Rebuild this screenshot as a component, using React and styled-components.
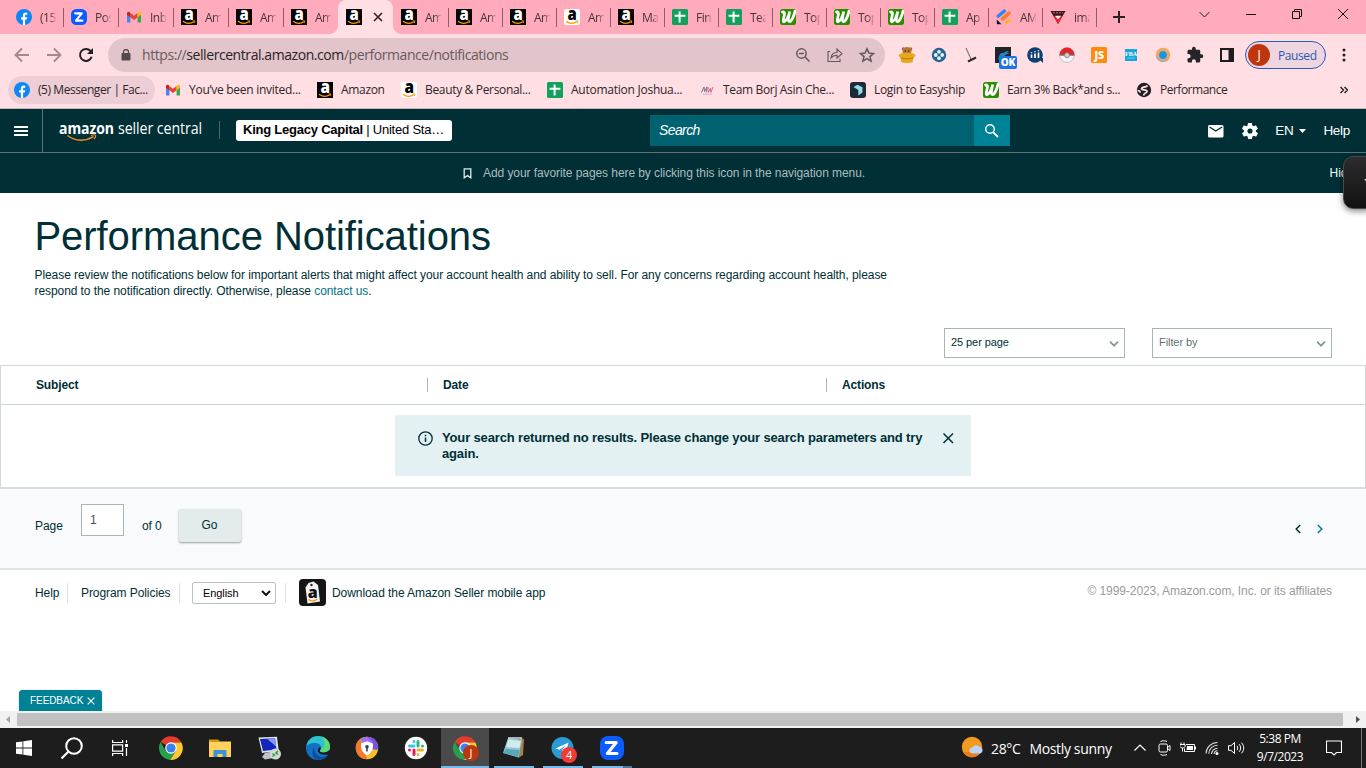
import React from 'react';
import styled, { createGlobalStyle, css } from 'styled-components';

const TABS = [
  { icon: 'facebook', label: '(15)' },
  { icon: 'zoom', label: 'Pos' },
  { icon: 'gmail', label: 'Inbox' },
  { icon: 'amazon', label: 'Am' },
  { icon: 'amazon', label: 'Am' },
  { icon: 'amazon', label: 'Am' },
  { icon: 'amazon', active: true },
  { icon: 'amazon', label: 'Am', noLine: true },
  { icon: 'amazon', label: 'Am', narrow: true },
  { icon: 'amazon', label: 'Am', narrow: true },
  { icon: 'amazonLight', label: 'Am', narrow: true },
  { icon: 'amazon', label: 'Ma', narrow: true },
  { icon: 'sheets', label: 'Fin', narrow: true },
  { icon: 'sheets', label: 'Tea', narrow: true },
  { icon: 'leaf', label: 'Top', narrow: true },
  { icon: 'leaf', label: 'Top', narrow: true },
  { icon: 'leaf', label: 'Top', narrow: true },
  { icon: 'sheets', label: 'Ap', narrow: true },
  { icon: 'stripes', label: 'AM', narrow: true },
  { icon: 'triangle', label: 'ima', narrow: true },
];

const BOOKMARKS = [
  { icon: 'facebook', label: '(5) Messenger | Fac...', width: 151, spacing: -0.43, active: true },
  { icon: 'gmail', label: 'You’ve been invited...', width: 152, spacing: -0.27 },
  { icon: 'amazon', label: 'Amazon', width: 84 },
  { icon: 'amazonLight', label: 'Beauty & Personal...', width: 146 },
  { icon: 'sheets', label: 'Automation Joshua...', width: 152, spacing: -0.25 },
  { icon: 'mw', label: 'Team Borj Asin Che...', width: 151, spacing: -0.34 },
  { icon: 'easyship', label: 'Login to Easyship', width: 133 },
  { icon: 'leaf', label: 'Earn 3% Back*and s...', width: 153, spacing: -0.4 },
  { icon: 'globe', label: 'Performance', width: 110, spacing: -0.5 },
];

const Svg = ({ size = 16, width, height, box = '0 0 16 16', children, ...rest }) => (
  <svg width={width || size} height={height || size} viewBox={box} fill="none" {...rest}>
    {children}
  </svg>
);

const AmazonIcon = ({ light }) => (
  <Svg>
    <rect width="16" height="16" rx={light ? 2 : 0} fill={light ? '#fff' : '#000'} />
    <text x="3.4" y="11" textLength="9.2" lengthAdjust="spacingAndGlyphs" fontFamily="Open Sans, sans-serif" fontWeight="800" fontSize="17" fill={light ? '#000' : '#fff'}>a</text>
    <path d="M2 12.2c3.6 2.6 7.8 2.5 10.8.6" stroke="#f90" strokeWidth="1.2" />
    <path d="M11.6 11.9h2.4l-.9 2.2" stroke="#f90" strokeWidth=".9" />
  </Svg>
);

const ZIcon = ({ size = 16 }) => (
  <Svg size={size} box="0 0 24 24">
    <rect width="24" height="24" rx="8" fill="#0b5cff" />
    <path d="M6.2 6.5h10L7.4 17.5H17" stroke="#fff" strokeWidth="3.2" strokeLinejoin="round" strokeLinecap="round" />
  </Svg>
);

const ChromeIcon = () => (
  <Svg size={24} box="0 0 24 24">
    <path d="M12 12 1.6 6A12 12 0 0 1 22.4 6.4H12z" fill="#e33b2e" />
    <path d="M1.6 6A12 12 0 0 0 11.2 24L17 15 12 12 6.8 15z" fill="#26a14b" />
    <path d="M12 6.4h10.4A12 12 0 0 1 11.2 24l5.7-9z" fill="#fdc92f" />
    <circle cx="12" cy="12" r="5.8" fill="#fff" />
    <circle cx="12" cy="12" r="4.6" fill="#3b82f0" />
  </Svg>
);

const icons = {
  amazon: <AmazonIcon />,
  amazonLight: <AmazonIcon light />,
  zoom: <ZIcon />,
  facebook: (
    <Svg>
      <circle cx="8" cy="8" r="8" fill="#0f86f5" />
      <path d="M6.9 16v-5.4H5V8.3h1.9V6.7c0-2 1.1-3.1 2.9-3.1l1.5.1v2h-.9c-1 0-1.3.6-1.3 1.2v1.4h2.1l-.4 2.3H9.1V16z" fill="#fff" />
    </Svg>
  ),
  gmail: (
    <Svg>
      <path d="M1 13.6V4.4l3.4 2.4v6.8z" fill="#4285f4" />
      <path d="M11.6 13.6V6.8L15 4.4v9.2z" fill="#34a853" />
      <path d="M4.4 4 8 6.7 11.6 4v4.2L8 10.9 4.4 8.2z" fill="#ea4335" />
      <path d="M1 4.6C1 2.6 3 2.2 4.4 3.9v4.3L1 5.7z" fill="#c5221f" />
      <path d="M15 4.6c0-2-2-2.4-3.4-.7v4.3L15 5.7z" fill="#fbbc04" />
    </Svg>
  ),
  sheets: (
    <Svg>
      <rect width="16" height="16" rx="1.5" fill="#12a05c" />
      <path d="M2.6 6.8h10.8M7.6 2.6v11" stroke="#fff" strokeWidth="2" />
    </Svg>
  ),
  leaf: (
    <Svg>
      <rect width="16" height="16" rx="2.5" fill="#249000" />
      <path d="M1.5 3.6C4 2 5 3.400 4.200 6.500c-.9 3.500-1.500 6.500-.2 6.300C6.500 12 8.500 7 9.800 2.500 8.800 6.500 7.500 12.600 9.300 12.700 11.500 12.500 14 7 15.300 1" stroke="#fff" strokeWidth="2.700" />
    </Svg>
  ),
  stripes: (
    <Svg>
      <path d="M2.200 7.200 8.300 2" stroke="#2f86ee" strokeWidth="3.400" strokeLinecap="round" />
      <path d="m6.500 9.800 6.500-5.600" stroke="#ff7a2b" strokeWidth="3.600" strokeLinecap="round" />
      <path d="m10.500 13.700 3-2.700" stroke="#ffb521" strokeWidth="3" strokeLinecap="round" />
      <path d="M.8 10.500v4.700h4.700z" fill="#10133f" />
    </Svg>
  ),
  triangle: (
    <Svg>
      <path d="M.5 2h15L8 15z" fill="#3b1520" />
      <path d="M3.500 7h9L8 15z" fill="#f0222b" />
      <path d="M5 6.800h6L8 10.500z" fill="#f5eef0" />
      <path d="M3 3.800h10" stroke="#c87a52" strokeDasharray="2 1" />
    </Svg>
  ),
  mw: (
    <Svg>
      <path d="M2.500 10.500 5 5l.5 4.500L8 5l-.8 5.500" stroke="#6d7799" />
      <path d="m9 5 .3 5.500L11.500 6l.3 4.500L14 5" stroke="#d56c84" />
      <path d="M4 12.300h9" stroke="#c6a2b0" strokeWidth=".7" />
    </Svg>
  ),
  easyship: (
    <Svg>
      <rect width="16" height="16" rx="3" fill="#1c2b3b" />
      <path d="M3.500 5 7.500 2.800l5 2.400v5.200l-4.200 3V8z" fill="#8fdce2" />
    </Svg>
  ),
  globe: (
    <Svg>
      <circle cx="8" cy="8" r="7.200" fill="#1f2023" />
      <path d="M11.500 3.500C10 6 6.500 4 5.500 6.500c-.5 2 5.500.5 5.500 2.800 0 2-3 1.200-3.500 4.200" stroke="#ffdee4" strokeWidth="1.800" />
      <path d="M1.500 8.500c1.500 0 2.700.8 2.700 2.300" stroke="#ffdee4" strokeWidth="1.600" />
    </Svg>
  ),
};

const extensions = [
  // bear in a pot
  <Svg key="bear" size={18} box="0 0 18 18">
    <circle cx="5.500" cy="3" r="1.800" fill="#a4682d" />
    <circle cx="12.500" cy="3" r="1.800" fill="#a4682d" />
    <circle cx="9" cy="5.500" r="4.500" fill="#b87938" />
    <ellipse cx="9" cy="9.500" rx="8.500" ry="2.800" fill="#e7a81c" />
    <path d="M2.500 11h13l-.8 5c-2.500 1.300-9 1.300-11.400 0z" fill="#e7a81c" />
    <path d="M2.500 11.800c3 1.300 10 1.300 13 0" stroke="#b87b12" />
    <circle cx="7.300" cy="5" r=".7" fill="#412" />
    <circle cx="10.700" cy="5" r=".7" fill="#412" />
  </Svg>,
  <Svg key="clover">
    <circle cx="8" cy="8" r="7.200" fill="#2b6390" />
    <g fill="#d9f4fa">
      <circle cx="8" cy="4.800" r="1.900" />
      <circle cx="8" cy="11.200" r="1.900" />
      <circle cx="4.800" cy="8" r="1.900" />
      <circle cx="11.200" cy="8" r="1.900" />
    </g>
  </Svg>,
  <Svg key="broom">
    <path d="m3 1 5 11" stroke="#777" strokeWidth="1.100" />
    <path d="m5 14.500 8-4" stroke="#292929" strokeWidth="2" />
  </Svg>,
  null,
  <Svg key="bars">
    <circle cx="8" cy="8" r="7.800" fill="#0f3e73" />
    <path d="M11 11h5v5z" fill="#0f3e73" />
    <path d="M4.500 7.500V11M8 6.500V11M11.500 5.500V11" stroke="#fff" strokeWidth="1.700" />
    <path d="M4.500 5.200v1M8 4.200v1M11.500 3.200v1" stroke="#fff" strokeWidth="1.500" />
  </Svg>,
  <Svg key="ball">
    <circle cx="8" cy="8" r="7.500" fill="#f3f3f3" stroke="#b9aeb0" strokeWidth=".7" />
    <path d="M.5 8a7.500 7.500 0 0 1 15 0z" fill="#e02429" />
    <path d="M.5 8.200h15" stroke="#7c7c7c" strokeWidth="1.300" />
    <circle cx="8" cy="8.200" r="2.400" fill="#d5d5d5" stroke="#888" />
  </Svg>,
  <Svg key="js">
    <rect width="16" height="16" rx="1.500" fill="#ff8a0c" />
    <text x="8.300" y="12.300" textAnchor="middle" fontFamily="Open Sans, sans-serif" fontWeight="800" fontSize="10.500" fill="#fff">JS</text>
  </Svg>,
  <Svg key="fba" size={12} box="0 0 12 12">
    <rect width="12" height="12" fill="#16a8dd" />
    <text x="6" y="7" textAnchor="middle" fontFamily="Liberation Serif, serif" fontWeight="700" fontSize="6" fill="#fff">FBA</text>
    <path d="M2 9h8" stroke="#61c8ec" />
  </Svg>,
  <Svg key="ring">
    <circle cx="8" cy="8" r="5.700" stroke="#f4a55f" strokeWidth="3.200" />
    <path d="M2.500 9.500A5.700 5.700 0 0 0 12 12" stroke="#b9aaa5" strokeWidth="2" />
    <circle cx="8" cy="8" r="4" fill="#1e95d6" />
  </Svg>,
  <Svg key="puzzle" size={18} box="0 0 24 24">
    <path fill="#242528" d="M20.500 11H19V7c0-1.100-.9-2-2-2h-4V3.500a2.500 2.500 0 0 0-5 0V5H4c-1.100 0-2 .9-2 2v3.800h1.500a2.700 2.700 0 0 1 0 5.400H2V20c0 1.100.9 2 2 2h3.800v-1.500a2.700 2.700 0 0 1 5.400 0V22H17c1.100 0 2-.9 2-2v-4h1.500a2.500 2.500 0 0 0 0-5z" />
  </Svg>,
  <Svg key="panel">
    <path d="M2 2h12v12H2z" stroke="#1d1d20" strokeWidth="2" />
    <path d="M9.500 2H14v12H9.500z" fill="#1d1d20" />
  </Svg>,
];

const pinnedApps = [
  { key: 'chrome', icon: <ChromeIcon /> },
  {
    key: 'files',
    icon: (
      <Svg size={24} box="0 0 24 24">
        <path d="M1 3.500h9l2 2h-9L1 7z" fill="#dc9800" />
        <path d="M1 5.500h22V21H1z" fill="#ffd25e" />
        <path d="M5.500 21v-6c0-.6.4-1 1-1h11c.6 0 1 .4 1 1v6h-4v-3h-5v3z" fill="#3c94d4" />
      </Svg>
    ),
  },
  {
    key: 'remote',
    icon: (
      <Svg size={26} box="0 0 26 26">
        <path d="m2.500 2.500 18.500-.7 1.700 14L6 18z" fill="#dfe3ea" />
        <path d="m4 4 15-.7 1.500 11.200L7 16z" fill="#1327bb" />
        <path d="m11 3.700 8-.4 1 8.200z" fill="#7d9aef" />
        <path d="m9 18 7-1.500 2 6.500-9 1.500-3-2.500z" fill="#bfc3c8" />
        <circle cx="19.500" cy="19" r="5.500" fill="#d4d8d2" />
        <path d="m16.500 18.500 2 1.500-2 1.500M22 16l-2 2 2 1.500" stroke="#269633" strokeWidth="1.400" />
      </Svg>
    ),
  },
  {
    key: 'edge',
    icon: (
      <Svg size={24} box="0 0 24 24">
        <circle cx="12" cy="12" r="12" fill="#1570c5" />
        <path d="M.3 10.500C1.500 4 6 0 12 0c7 0 12 5 12 10.500 0 4-3 6-6.500 6-3 0-4.300-1.300-3-3 1.800-2.500-.4-6.500-5-6.500C5 7 1.500 8.500.3 10.500z" fill="#2fc0d1" />
        <path d="M16 .8c5 1.800 8 5.600 8 9.700 0 4-3 6-6.500 6-3 0-4.300-1.300-3-3 4.500-.5 5.500-7 1.500-12.700z" fill="#5bdc72" />
        <path d="M8.500 11.500c-1 5 3 9.500 8 9.500 2.500 0 4.500-1 6-2.500-2 3.500-6 5.500-10.500 5.500-4-1-6-5-5.500-8.500.2-2 1-3.300 2-4z" fill="#0c4f9e" />
        <path d="M14.500 13.500c-1.300 1.700 0 3 3 3 2.500 0 4.700-.9 5.800-2.700L24 17l-1 1.500c-6 1-10.500-.5-11-3.500 0-2 .5-3.300 2-4 .9.900 1 1.800.5 2.500z" fill="#1a1a1c" />
      </Svg>
    ),
  },
  {
    key: 'shield',
    icon: (
      <Svg size={24} box="0 0 24 24">
        <circle cx="12" cy="12" r="11.200" fill="#f9bd32" />
        <path d="M12 12V.8A11.200 11.200 0 0 1 22.500 8c1 3 .7 5-.5 6z" fill="#7b4fe6" />
        <path d="M5 3.300A11.200 11.200 0 0 1 12 .8L18 6 8 8z" fill="#a070ee" />
        <path d="M5 3.300A11.200 11.200 0 0 0 12 23.200L9 12z" fill="#f5792c" />
        <path d="M12 5.200 18 7.500c.5 5.500-1.500 9.500-6 12-4.500-2.500-6.500-6.500-6-12z" fill="#fff" />
        <circle cx="12" cy="10.700" r="1.800" fill="#333c5c" />
        <path d="M12 11v4.500" stroke="#333c5c" strokeWidth="1.600" />
      </Svg>
    ),
  },
  {
    key: 'slack',
    icon: (
      <Svg size={24} box="0 0 24 24">
        <circle cx="12" cy="12" r="11.200" fill="#fff" />
        <g strokeWidth="3" strokeLinecap="round">
          <path d="M10 5.500v.1M5.500 10H10" stroke="#36c5f0" />
          <path d="M14 5.500V10M18.500 10v.1" stroke="#2eb67d" />
          <path d="M14 18.500v-.1M14 14h4.500" stroke="#ecb22e" />
          <path d="M10 14v4.500M5.500 14v.1" stroke="#e01e5a" />
        </g>
      </Svg>
    ),
  },
  { key: 'chromeOpen', icon: <ChromeIcon />, current: true, badge: 'J', badgeColor: '#bb360f' },
  {
    key: 'notepad',
    icon: (
      <Svg size={24} box="0 0 24 24">
        <path d="m18 2 4 1-1 16-5 3z" fill="#a5824e" />
        <path d="m6 2 14 1.500-3.500 18L1 17z" fill="#8fc8d4" />
        <path d="M6.500 3.500 19 5l-1.500 7L4 11z" fill="#d3eaed" />
        <path d="m4 13 13.500 1-1.500 7L1 17z" fill="#56a7b9" />
        <path d="M6 2h14" stroke="#ddd" strokeWidth="1.500" />
      </Svg>
    ),
    open: true,
  },
  {
    key: 'telegram',
    icon: (
      <Svg size={24} box="0 0 24 24">
        <circle cx="11.500" cy="12" r="11" fill="#2a9bd6" />
        <path d="m4.500 12.500 13-6-3 11-4-3 4-5-6 4.300z" fill="#fff" />
      </Svg>
    ),
    open: true, badge: '4', badgeColor: '#f23b35',
  },
  { key: 'zoom', icon: <ZIcon size={24} />, open: true, stacked: true },
];

const TabItem = ({ tab, first }) => (
  <Tab $active={tab.active} $narrow={tab.narrow} $line={!first && !tab.active && !tab.noLine}>
    {icons[tab.icon]}
    {tab.active ? (
      <TabClose>
        <Svg size={10} box="0 0 10 10"><path d="m1 1 8 8M9 1 1 9" stroke="#2b2225" strokeWidth="1.600" /></Svg>
      </TabClose>
    ) : (
      <TabLabel>{tab.label}</TabLabel>
    )}
  </Tab>
);

const Browser = () => (
  <>
    <TabStrip>
      {TABS.map((tab, i) => <TabItem key={i} tab={tab} first={i === 0} />)}
      <NewTab><Svg size={12} box="0 0 12 12"><path d="M6 0v12M0 6h12" stroke="#2b2225" strokeWidth="2" /></Svg></NewTab>
      <WindowButtons>
        <Svg size={11} box="0 0 11 11"><path d="m.5 3 5 5 5-5" stroke="#222" /></Svg>
        <Svg size={10} box="0 0 10 10"><path d="M0 5.500h10" stroke="#111" /></Svg>
        <Svg size={10} box="0 0 10 10"><path d="M.5 2.500h7v7h-7zM2.500 2.500v-2h7v7h-2" stroke="#111" /></Svg>
        <Svg size={10} box="0 0 10 10"><path d="m0 0 10 10M10 0 0 10" stroke="#111" /></Svg>
      </WindowButtons>
    </TabStrip>
    <Toolbar>
      <ToolCell><Svg><path d="M15 8H2M8 1.500 1.500 8 8 14.500" stroke="#a5888e" strokeWidth="1.800" /></Svg></ToolCell>
      <ToolCell><Svg><path d="M1 8h13M8 1.500 14.500 8 8 14.500" stroke="#a5888e" strokeWidth="1.800" /></Svg></ToolCell>
      <ToolCell>
        <Svg>
          <path d="M13.700 9.800A6 6 0 1 1 12.400 3.800l1.600 1.700" stroke="#202124" strokeWidth="2" />
          <path d="M15 1v6H9z" fill="#202124" />
        </Svg>
      </ToolCell>
      <Omnibox>
        <Svg width={10} height={12} box="0 0 10 12">
          <rect x=".5" y="4" width="9" height="7.500" rx="1" fill="#55494d" />
          <path d="M2.500 4.500V3a2.500 2.500 0 0 1 5 0v1.500" stroke="#55494d" strokeWidth="1.300" />
        </Svg>
        <Url>https://<b>sellercentral.amazon.com</b>/performance/notifications</Url>
        <ToolCell>
          <Svg>
            <circle cx="6.500" cy="6.500" r="4.700" stroke="#66575b" strokeWidth="1.500" />
            <path d="m10 10 4.500 4.500M4 6.500h5" stroke="#66575b" strokeWidth="1.500" />
          </Svg>
        </ToolCell>
        <ToolCell>
          <Svg><path d="M3 4.500H1v10h12v-3M4 11c.5-4 3-5.500 6-5.500V2L15 6.700 10 11V8.200C7.500 8.200 5.500 9 4 11z" stroke="#66575b" strokeWidth="1.100" /></Svg>
        </ToolCell>
        <ToolCell>
          <Svg><path d="m8 1.800 1.900 4.300 4.600.4-3.500 3.100 1.100 4.600L8 11.700l-4.100 2.500L5 9.600 1.500 6.500l4.600-.4z" stroke="#66575b" strokeWidth="1.500" /></Svg>
        </ToolCell>
      </Omnibox>
      <Extensions>
        {extensions.map((icon, i) => (
          <ToolCell key={i}>
            {icon || (
              <BadgedIcon>
                <Svg>
                  <rect width="16" height="16" fill="#222326" />
                  <path d="M3 13c1-5 3-8 5-7 1 0 2-2 6-2l-2 2h3l-5 2c-1 3-4 2-7 5z" fill="#2583c9" />
                </Svg>
                <OkBadge>OK</OkBadge>
              </BadgedIcon>
            )}
          </ToolCell>
        ))}
      </Extensions>
      <Profile><Avatar>J</Avatar>Paused</Profile>
      <Dots>
        <Svg width={4} height={16} box="0 0 4 16">
          <g fill="#202124"><circle cx="2" cy="3" r="1.500" /><circle cx="2" cy="8" r="1.500" /><circle cx="2" cy="13" r="1.500" /></g>
        </Svg>
      </Dots>
    </Toolbar>
    <BookmarkBar>
      {BOOKMARKS.map((b) => (
        <Bookmark key={b.label} $width={b.width} $active={b.active} $spacing={b.spacing}>
          {icons[b.icon]}
          <span>{b.label}</span>
        </Bookmark>
      ))}
      <More><Svg width={8} height={8} box="0 0 8 8"><path d="m.5 1 3 3-3 3M4.500 1l3 3-3 3" stroke="#202124" strokeWidth="1.400" /></Svg></More>
    </BookmarkBar>
  </>
);

const Header = () => (
  <>
    <TopNav>
      <MenuButton>
        <Svg width={14} height={12} box="0 0 14 12"><path d="M0 2h14M0 6h14M0 10h14" stroke="#fff" strokeWidth="1.800" /></Svg>
      </MenuButton>
      <Logo>
        <Svg width={144} height={24} box="0 0 144 24">
          <g fontFamily="Open Sans, sans-serif" fontSize="16" fill="#fff">
            <text x="0" y="14" fontWeight="700" textLength="55" lengthAdjust="spacingAndGlyphs">amazon</text>
            <text x="59" y="14" textLength="84" lengthAdjust="spacingAndGlyphs">seller central</text>
          </g>
          <path d="M8.500 15.500c8 6 18 6 26 1.200" stroke="#f19020" strokeWidth="1.500" />
          <path d="M32 15.600c2-.8 4.200-.8 4.500-.3.300.6-.4 2.600-1.500 3.800" stroke="#f19020" strokeWidth="1.100" />
        </Svg>
      </Logo>
      <Account><b>King Legacy Capital</b> | United Sta…</Account>
      <Search>Search</Search>
      <SearchButton>
        <Svg>
          <circle cx="6" cy="6" r="4.300" stroke="#fff" strokeWidth="1.500" />
          <path d="m9.300 9.300 4.700 4.700" stroke="#fff" strokeWidth="1.800" />
        </Svg>
      </SearchButton>
      <NavRight>
        <Svg>
          <rect y="2" width="15.500" height="12.500" rx="1.500" fill="#fff" />
          <path d="m1.500 4 6.300 4 6.300-4" stroke="#002f36" strokeWidth="1.400" />
        </Svg>
        <Svg size={18} box="3 3 18 18">
          <path
            fill="#fff"
            transform="translate(2.400 2.400) scale(.8)"
            d="M19.400 13a7.500 7.500 0 0 0 0-2l2.100-1.600c.2-.2.300-.5.100-.7l-2-3.500c-.1-.2-.4-.3-.6-.2l-2.500 1a7 7 0 0 0-1.700-1l-.4-2.600a.5.500 0 0 0-.5-.4h-4c-.2 0-.4.200-.5.400l-.4 2.600a7 7 0 0 0-1.700 1l-2.500-1c-.2-.1-.5 0-.6.200l-2 3.500c-.1.200-.1.500.1.700L4.500 11a7.500 7.500 0 0 0 0 2l-2.100 1.600c-.2.200-.2.500-.1.700l2 3.500c.1.200.4.300.6.200l2.500-1a7 7 0 0 0 1.700 1l.4 2.600c.1.200.3.400.5.400h4c.2 0 .4-.2.500-.4l.4-2.600a7 7 0 0 0 1.700-1l2.500 1c.2.100.5 0 .6-.2l2-3.500c.1-.2.100-.5-.1-.7zM12 15.200a3.200 3.200 0 1 1 0-6.400 3.200 3.200 0 0 1 0 6.400z"
          />
        </Svg>
        <Language>EN<Svg width={7} height={4} box="0 0 7 4"><path d="M0 0h7L3.500 4z" fill="#fff" /></Svg></Language>
        <span>Help</span>
      </NavRight>
    </TopNav>
    <FavoritesBar>
      <Svg width={9} height={11} box="0 0 9 11"><path d="M1.200.8h6.600v9L4.500 7.600 1.200 9.800z" stroke="#e3eaea" strokeWidth="1.300" /></Svg>
      <span>Add your favorite pages here by clicking this icon in the navigation menu.</span>
      <Hide>Hide</Hide>
      <SidePanelHandle><Svg width={6} height={6} box="0 0 6 6"><path d="M0 1h6L3.500 5z" fill="#ccc" /></Svg></SidePanelHandle>
    </FavoritesBar>
  </>
);

const Select = ({ children, muted }) => (
  <SelectBox $muted={muted}>
    {children}
    <Svg width={10} height={6} box="0 0 10 6"><path d="m1 .7 4 4 4-4" stroke="#879596" strokeWidth="1.700" /></Svg>
  </SelectBox>
);

const Notifications = () => (
  <Page>
    <Intro>
      <Title>Performance Notifications</Title>
      <Lead>
        Please review the notifications below for important alerts that might affect your account health and ability to sell. For any concerns regarding account health, please<br />
        respond to the notification directly. Otherwise, please <a>contact us</a>.
      </Lead>
    </Intro>
    <Filters>
      <Select>25 per page</Select>
      <Select muted>Filter by</Select>
    </Filters>
    <Table>
      <TableHead>
        <Column>Subject</Column>
        <Column>Date</Column>
        <Column>Actions</Column>
      </TableHead>
      <TableBody>
        <Alert>
          <Svg>
            <circle cx="7.500" cy="8.500" r="6.700" stroke="#002f36" strokeWidth="1.300" />
            <path d="M7.500 7.500V12M7.500 4.700v1.500" stroke="#002f36" strokeWidth="1.500" />
          </Svg>
          <p>Your search returned no results. Please change your search parameters and try<br />again.</p>
          <Svg size={12} box="0 0 12 12"><path d="m1.500 1.500 9.500 9.500M11 1.500 1.500 11" stroke="#002f36" strokeWidth="1.500" /></Svg>
        </Alert>
      </TableBody>
    </Table>
    <Pagination>
      <PageText $width={46}>Page</PageText>
      <PageInput>1</PageInput>
      <PageText $width={36}>of 0</PageText>
      <GoButton>Go</GoButton>
      <Pager>
        <Svg width={6} height={10} box="0 0 6 10"><path d="M5.200 1 1.200 5l4 4" stroke="#002f36" strokeWidth="1.500" /></Svg>
        <Svg width={6} height={10} box="0 0 6 10"><path d="m.8 1 4 4-4 4" stroke="#008296" strokeWidth="1.600" /></Svg>
      </Pager>
    </Pagination>
    <Footer>
      <FooterLink $width={33}>Help</FooterLink>
      <FooterLink $width={112}>Program Policies</FooterLink>
      <FooterLink $width={106}>
        <LangSelect>
          English
          <Svg width={10} height={6} box="0 0 10 6"><path d="m1 1 4 4 4-4" stroke="#111" strokeWidth="2" /></Svg>
        </LangSelect>
      </FooterLink>
      <AppLink>
        <Svg width={27} height={28} box="0 0 27 28">
          <rect width="27" height="27" rx="4" fill="#151515" />
          <path d="M6.500 8.500 9.500 4l5-1.500L19 6l2 16.500L8.500 24.500z" fill="#f3f3f3" />
          <circle cx="12.500" cy="6" r="1.200" fill="#222" />
          <text x="13.800" y="18.500" textAnchor="middle" fontFamily="Open Sans, sans-serif" fontWeight="800" fontSize="16" fill="#111">a</text>
          <path d="M9.500 20.500c3 2 6.500 1.500 9-.5" stroke="#f90" strokeWidth="1.200" />
        </Svg>
        Download the Amazon Seller mobile app
      </AppLink>
      <Copyright>© 1999-2023, Amazon.com, Inc. or its affiliates</Copyright>
    </Footer>
    <Feedback>
      FEEDBACK
      <Svg size={8} box="0 0 8 8"><path d="m.7.7 6.600 6.600M7.300.7.7 7.300" stroke="#fff" strokeWidth="1.200" /></Svg>
    </Feedback>
  </Page>
);

const Taskbar = () => (
  <Bar>
    <BarCell>
      <Svg><path d="M0 2.300 6.500 1.400v6.200H0zM7.300 1.300 16 0v7.600H7.300zM0 8.400h6.500v6.200L0 13.700zM7.300 8.400H16V16l-8.700-1.300z" fill="#fff" /></Svg>
    </BarCell>
    <BarCell>
      <Svg size={24} box="0 0 24 24">
        <circle cx="14" cy="10" r="7.800" stroke="#fff" strokeWidth="2" />
        <path d="m8.500 15.500-7 7" stroke="#fff" strokeWidth="2.200" />
      </Svg>
    </BarCell>
    <BarCell>
      <Svg>
        <path d="M.6 0v2.500h10V0M.6 16v-2.500h10V16M.6 4.900h10v6.200H.6zM14.500 0v3M14.500 8v8" stroke="#fff" strokeWidth="1.200" />
        <path d="M13 4h3v3h-3z" fill="#fff" />
      </Svg>
    </BarCell>
    <Apps>
      {pinnedApps.map((app) => (
        <AppCell key={app.key} $current={app.current} $open={app.open} $stacked={app.stacked}>
          {app.icon}
          {app.badge && <AppBadge $color={app.badgeColor}>{app.badge}</AppBadge>}
        </AppCell>
      ))}
    </Apps>
    <Weather>
      <Svg size={24} box="0 0 24 24">
        <circle cx="11" cy="11" r="10.200" fill="#f39a21" />
        <path d="M2 16a10.200 10.200 0 0 0 18 0z" fill="#ec7b18" />
        <path d="M11.500 17.500a3 3 0 0 1 0-6 4 4 0 0 1 7-.5 3.300 3.300 0 0 1 .5 6.500z" fill="#bcd4fa" />
      </Svg>
      <Temperature>28°C</Temperature>
      <span>Mostly sunny</span>
    </Weather>
    <Tray>
      <Svg><path d="m2.500 10.500 5.500-5.500 5.500 5.500" stroke="#fff" strokeWidth="1.200" /></Svg>
      <Svg>
        <rect x="3" y="4" width="8.500" height="8" rx="1.500" stroke="#fff" />
        <path d="m12 7 2-1.500v5L12 9M4.500 1.500c2-1 4.500-1 6.500 0M4.500 14.500c2 1 4.500 1 6.500 0" stroke="#fff" />
      </Svg>
      <Svg>
        <path d="M6 4.500h8.500v7H4.500v-3M15.500 6.500v3M0 4.500h5v2L3.500 8h-2L0 6.500zM1 4.500v-2M4 4.500v-2M2.500 8v3.500" stroke="#fff" />
        <path d="M7 6h6v4H6.500z" fill="#fff" />
      </Svg>
      <Svg>
        <path d="M2 13.500A11.500 11.500 0 0 1 13.500 2.500M4.800 13.800A8.700 8.700 0 0 1 13.500 5.200M7.600 14A5.900 5.900 0 0 1 13.500 8.200M10.200 14a3.300 3.300 0 0 1 3.300-3.300" stroke="#ddd" strokeWidth="1.100" />
        <circle cx="13" cy="13.400" r="1.500" fill="#fff" />
      </Svg>
      <Svg width={17} box="0 0 17 16">
        <path d="M.5 5.700H3L6.500 2.500v11L3 10.300H.5zM9 5.800c1 1.400 1 3 0 4.400M11.200 4.200c2 2.400 2 5.200 0 7.600M13.500 2.700c3 3.400 3 7.200 0 10.600" stroke="#fff" />
      </Svg>
    </Tray>
    <Clock><span>5:38 PM</span><span>9/7/2023</span></Clock>
    <ActionCenter><Svg><path d="M.5 1h15v11.500h-5L8 15l-2.500-2.500h-5z" stroke="#fff" strokeWidth="1.100" /></Svg></ActionCenter>
  </Bar>
);

const App = () => (
  <Screen>
    <GlobalStyle />
    <Browser />
    <Header />
    <Notifications />
    <Scrollbar>
      <Svg size={17} box="0 0 17 17"><path d="M10 5v7L6 8.500z" fill="#a3a3a3" /></Svg>
      <Thumb />
      <ScrollEnd><Svg size={17} box="0 0 17 17"><path d="M7 5v7l4-3.500z" fill="#505050" /></Svg></ScrollEnd>
    </Scrollbar>
    <Taskbar />
  </Screen>
);

export default App;

// Styled Components
const GlobalStyle = createGlobalStyle`
  * {
    box-sizing: border-box;
  }

  body {
    margin: 0;
    overflow: hidden;
  }

  svg {
    display: block;
    flex: none;
  }

  p {
    margin: 0;
  }
`;

const uiFont = css`
  font-family: 'Open Sans', 'Noto Sans', sans-serif;
`;

const Screen = styled.div`
  display: flex;
  flex-direction: column;
  width: 1366px;
  height: 768px;
  background: #fff;
  color: #002f36;
  font-family: 'Liberation Sans', Arial, sans-serif;
  font-size: 12px;
  letter-spacing: -0.075px;
  white-space: nowrap;
  overflow: hidden;
`;

const TabStrip = styled.div`
  ${uiFont}
  display: flex;
  height: 34px;
  padding-left: 8px;
  background: #ffabbb;
`;

const tabLine = css`
  background: linear-gradient(#8d6069, #8d6069) 0 8px / 1px 19px no-repeat;
`;

const Tab = styled.div`
  position: relative;
  display: flex;
  align-items: center;
  width: ${({ $narrow }) => ($narrow ? 54 : 55)}px;
  padding-left: 8px;
  flex: none;

  ${({ $line }) => $line && tabLine}

  ${({ $active }) => $active && css`
    background: #ffdee4;
    border-radius: 8px 8px 0 0;

    &::before,
    &::after {
      content: '';
      position: absolute;
      bottom: 0;
      width: 8px;
      height: 8px;
    }

    &::before {
      left: -8px;
      background: radial-gradient(circle at 0 0, transparent 7.5px, #ffdee4 8px);
    }

    &::after {
      right: -8px;
      background: radial-gradient(circle at 100% 0, transparent 7.5px, #ffdee4 8px);
    }
  `}
`;

const TabLabel = styled.span`
  width: 16px;
  margin-left: 8px;
  overflow: hidden;
  color: #46353a;
  letter-spacing: -0.5px;
  mask-image: linear-gradient(90deg, #000 60%, rgba(0, 0, 0, 0.15));
`;

const TabClose = styled.span`
  margin-left: 11px;
`;

const NewTab = styled.div`
  ${tabLine}
  display: flex;
  align-items: center;
  padding-left: 17px;
`;

const WindowButtons = styled.div`
  display: flex;
  align-items: center;
  gap: 36px;
  height: 28px;
  margin-left: auto;
  padding-right: 18px;
`;

const Toolbar = styled.div`
  ${uiFont}
  display: flex;
  align-items: center;
  height: 42px;
  padding-left: 6px;
  background: #ffdee4;
`;

const ToolCell = styled.div`
  display: flex;
  justify-content: center;
  width: 32px;
  flex: none;
`;

const Omnibox = styled.div`
  display: flex;
  align-items: center;
  width: 777px;
  height: 34px;
  margin-left: 6px;
  padding: 0 2px 0 13px;
  border-radius: 17px;
  background: #e1c5ca;
`;

const Url = styled.span`
  margin: 0 auto 0 11px;
  padding-bottom: 1px;
  color: #6a595d;
  font-size: 14px;
  letter-spacing: -0.43px;

  b {
    color: #2b2225;
    font-weight: 400;
  }
`;

const Extensions = styled.div`
  display: flex;
  align-items: center;
  margin-left: 6px;
`;

const BadgedIcon = styled.div`
  position: relative;
`;

const OkBadge = styled.span`
  position: absolute;
  top: 9px;
  left: 4px;
  width: 18px;
  height: 13px;
  border-radius: 2px;
  background: #1a73e8;
  color: #fff;
  font-size: 10px;
  font-weight: 800;
  line-height: 13px;
  text-align: center;
`;

const Profile = styled.div`
  display: flex;
  align-items: center;
  gap: 8px;
  width: 81px;
  height: 28px;
  margin-left: 2px;
  padding-left: 2px;
  border: 1px solid #2a5ab5;
  border-radius: 14px;
  background: #eed5df;
  color: #2a5ab5;
  font-size: 12px;
  letter-spacing: -0.4px;
`;

const Avatar = styled.span`
  width: 22px;
  height: 22px;
  border-radius: 50%;
  background: #bf360c;
  color: #fff;
  line-height: 22px;
  text-align: center;
`;

const Dots = styled.div`
  margin-left: 16px;
`;

const BookmarkBar = styled.div`
  ${uiFont}
  display: flex;
  align-items: center;
  height: 33px;
  padding: 0 18px 4px 8px;
  border-bottom: 1px solid #c9b4b8;
  background: #ffdee4;
  color: #2e2629;
`;

const Bookmark = styled.div`
  display: flex;
  align-items: center;
  gap: 8px;
  width: ${({ $width }) => $width - 4}px;
  height: 28px;
  margin-right: 4px;
  padding-left: 6px;
  flex: none;
  border-radius: 14px;
  background: ${({ $active }) => ($active ? '#edced4' : 'transparent')};
  letter-spacing: ${({ $spacing = -0.33 }) => $spacing}px;

  span {
    padding-bottom: 1px;
  }
`;

const More = styled.div`
  margin-left: auto;
`;

const TopNav = styled.div`
  display: flex;
  align-items: center;
  height: 44px;
  border-bottom: 1px solid #5b7478;
  background: #002f36;
  color: #fff;
`;

const MenuButton = styled.div`
  display: flex;
  align-items: center;
  align-self: stretch;
  width: 43px;
  padding-left: 14px;
  border-right: 1px solid #5b7478;
`;

const Logo = styled.div`
  width: 177px;
  padding: 2px 0 0 16px;
  background: linear-gradient(#4b666b, #4b666b) 176px 3px / 1px 18px no-repeat;
`;

const Account = styled.div`
  width: 216px;
  height: 21px;
  margin-left: 16px;
  padding-left: 7px;
  border-radius: 3px;
  background: #fff;
  color: #000;
  font-size: 13px;
  letter-spacing: -0.23px;
  line-height: 20px;
`;

const Search = styled.div`
  width: 324px;
  height: 31px;
  margin-left: 198px;
  padding-left: 9px;
  background: #006170;
  font-size: 14px;
  font-style: italic;
  letter-spacing: -0.6px;
  line-height: 30px;
`;

const SearchButton = styled.div`
  display: flex;
  align-items: center;
  justify-content: center;
  width: 36px;
  height: 31px;
  background: #008296;
`;

const NavRight = styled.div`
  display: flex;
  align-items: center;
  gap: 17px;
  margin-left: auto;
  padding-right: 16px;
  font-size: 13.5px;
  letter-spacing: -0.3px;
`;

const Language = styled.span`
  display: flex;
  align-items: center;
  gap: 6px;
  margin-left: -1px;
`;

const FavoritesBar = styled.div`
  position: relative;
  display: flex;
  align-items: center;
  height: 40px;
  padding-left: 463px;
  background: #002f36;
  color: #abbcbe;

  & > span {
    margin-left: 11px;
  }
`;

const Hide = styled.div`
  margin-left: auto;
  padding-right: 12px;
  color: #fff;
`;

const SidePanelHandle = styled.div`
  position: absolute;
  top: 3px;
  right: -10px;
  z-index: 1;
  display: flex;
  align-items: center;
  width: 33px;
  height: 53px;
  padding: 0 0 4px 20px;
  border: 1px solid #444b4d;
  border-radius: 10px;
  background: linear-gradient(#2c2c2e, #121212);
  box-shadow: 0 2px 6px rgba(0, 0, 0, 0.5);
`;

const Page = styled.main`
  display: flex;
  flex-direction: column;
  flex: 1;
`;

const Intro = styled.div`
  height: 135px;
  padding: 20px 34.5px 0;
`;

const Title = styled.h1`
  margin: 0;
  font-size: 40px;
  font-weight: 400;
  line-height: 46px;
  letter-spacing: -0.06px;
`;

const Lead = styled.p`
  margin-top: 8px;
  line-height: 16px;

  a {
    color: #007587;
  }
`;

const Filters = styled.div`
  display: flex;
  justify-content: flex-end;
  gap: 27px;
  height: 37px;
  padding-right: 34px;
`;

const SelectBox = styled.div`
  display: flex;
  align-items: center;
  justify-content: space-between;
  width: ${({ $muted }) => ($muted ? 180 : 181)}px;
  height: 30px;
  padding: 0 5px 2px 6px;
  border: 1px solid #a6b5b6;
  color: ${({ $muted }) => ($muted ? '#5d6f72' : '#002f36')};
  font-size: 11px;

  svg {
    margin-top: 4px;
  }
`;

const Table = styled.div`
  border: 1px solid #d2d9d9;
  border-bottom: 2px solid #d8dddd;
`;

const TableHead = styled.div`
  display: grid;
  grid-template-columns: 426px 399px 1fr;
  align-items: center;
  height: 39px;
  border-bottom: 1px solid #cdd6d6;
`;

const Column = styled.div`
  padding-left: 15px;
  border-left: 1px solid #a6b5b6;
  font-weight: 700;
  letter-spacing: -0.15px;

  &:first-child {
    padding-left: 35px;
    border-left: 0;
  }
`;

const TableBody = styled.div`
  display: flex;
  justify-content: center;
  height: 82px;
  padding-top: 10px;
`;

const Alert = styled.div`
  display: flex;
  align-items: flex-start;
  width: 576px;
  height: 61px;
  padding: 15px 17px 0 23px;
  background: #e3f1f2;
  font-size: 13px;
  font-weight: 700;
  letter-spacing: -0.15px;
  line-height: 16px;

  p {
    margin: 0 auto 0 8px;
  }

  svg:last-child {
    margin-top: 2px;
  }
`;

const Pagination = styled.div`
  display: flex;
  height: 81px;
  padding: 15px 43px 0 35px;
  border-bottom: 2px solid #dfe3e4;
  background: #f8fafb;
`;

const PageText = styled.span`
  width: ${({ $width }) => $width}px;
  padding-top: 15px;
`;

const PageInput = styled.div`
  width: 43px;
  height: 32px;
  margin-right: 18px;
  padding-left: 8px;
  border: 1px solid #a6b5b6;
  background: #fff;
  color: #3c4f52;
  line-height: 30px;
`;

const GoButton = styled.div`
  width: 62px;
  height: 33px;
  margin: 5px 0 0 0.5px;
  border-radius: 2px;
  background: #e3ebeb;
  box-shadow: 0 1px 2px rgba(0, 20, 25, 0.4);
  line-height: 32px;
  text-align: center;
`;

const Pager = styled.div`
  display: flex;
  gap: 16px;
  margin-left: auto;
  padding-top: 20px;
`;

const Footer = styled.footer`
  display: flex;
  align-items: center;
  height: 46px;
  padding: 0 34px 0 35px;
`;

const FooterLink = styled.span`
  display: flex;
  align-items: center;
  width: ${({ $width }) => $width}px;
  height: 20px;
  border-right: 1px solid #dde3e3;

  & + & {
    padding-left: 13px;
  }

  & + & + & {
    padding-left: 12px;
  }
`;

const LangSelect = styled.div`
  display: flex;
  align-items: center;
  justify-content: space-between;
  width: 84px;
  height: 22px;
  padding: 0 4px 0 10px;
  flex: none;
  border: 1px solid #b9c0c0;
  border-radius: 2px;
  color: #000;
  font-size: 11px;
`;

const AppLink = styled.div`
  display: flex;
  align-items: center;
  gap: 6px;
  margin-left: 13px;
`;

const Copyright = styled.span`
  margin-left: auto;
  padding-bottom: 4px;
  color: #9b9b9b;
`;

const Feedback = styled.div`
  display: flex;
  align-items: center;
  gap: 4px;
  width: 83px;
  height: 21px;
  margin: auto 0 0 19px;
  padding-left: 11px;
  border-radius: 4px 4px 0 0;
  background: #008296;
  box-shadow: 0 0 1px #666;
  color: #fff;
  font-size: 10px;
`;

const Scrollbar = styled.div`
  position: relative;
  display: flex;
  height: 17px;
  background: #f1f1f1;
`;

const Thumb = styled.div`
  width: 1326px;
  height: 13px;
  margin-top: 2px;
  background: #c1c1c1;
`;

const ScrollEnd = styled.div`
  margin-left: auto;
`;

const Bar = styled.div`
  ${uiFont}
  display: flex;
  height: 40px;
  background: #1d1d1d;
  color: #fff;
`;

const BarCell = styled.div`
  display: flex;
  align-items: center;
  justify-content: center;
  width: 48px;
`;

const Apps = styled.div`
  display: flex;
  gap: 1px;
  margin-left: 3px;
`;

const AppCell = styled.div`
  position: relative;
  display: flex;
  align-items: center;
  justify-content: center;
  width: 48px;

  ${({ $current }) => $current && css`
    background: #4a4a4a;
    border-bottom: 2px solid #76b9ed;
    padding-top: 2px;
  `}

  ${({ $open, $stacked }) => $open && css`
    background: linear-gradient(90deg, #76b9ed ${$stacked ? '31px' : '40px'}, #4b769b 0) 4px 100% / 40px 2px no-repeat;
  `}
`;

const AppBadge = styled.span`
  position: absolute;
  right: 10px;
  bottom: 5px;
  width: 16px;
  height: 16px;
  border-radius: 50%;
  background: ${({ $color }) => $color};
  font-size: 11px;
  line-height: 16px;
  text-align: center;
`;

const Weather = styled.div`
  display: flex;
  align-items: center;
  margin-left: 325px;
  font-size: 14px;
  letter-spacing: -0.35px;
`;

const Temperature = styled.span`
  margin: 0 9px 0 6px;
`;

const Tray = styled.div`
  display: flex;
  align-items: center;
  gap: 8px;
  margin-left: auto;
`;

const Clock = styled.div`
  display: flex;
  flex-direction: column;
  align-items: center;
  justify-content: center;
  width: 72px;
  padding-right: 2px;
  line-height: 18px;
  letter-spacing: -0.45px;
`;

const ActionCenter = styled.div`
  display: flex;
  align-items: center;
  justify-content: center;
  width: 45px;
  margin-right: 4px;
  padding-right: 11px;
  border-right: 1px solid #777;
`;
